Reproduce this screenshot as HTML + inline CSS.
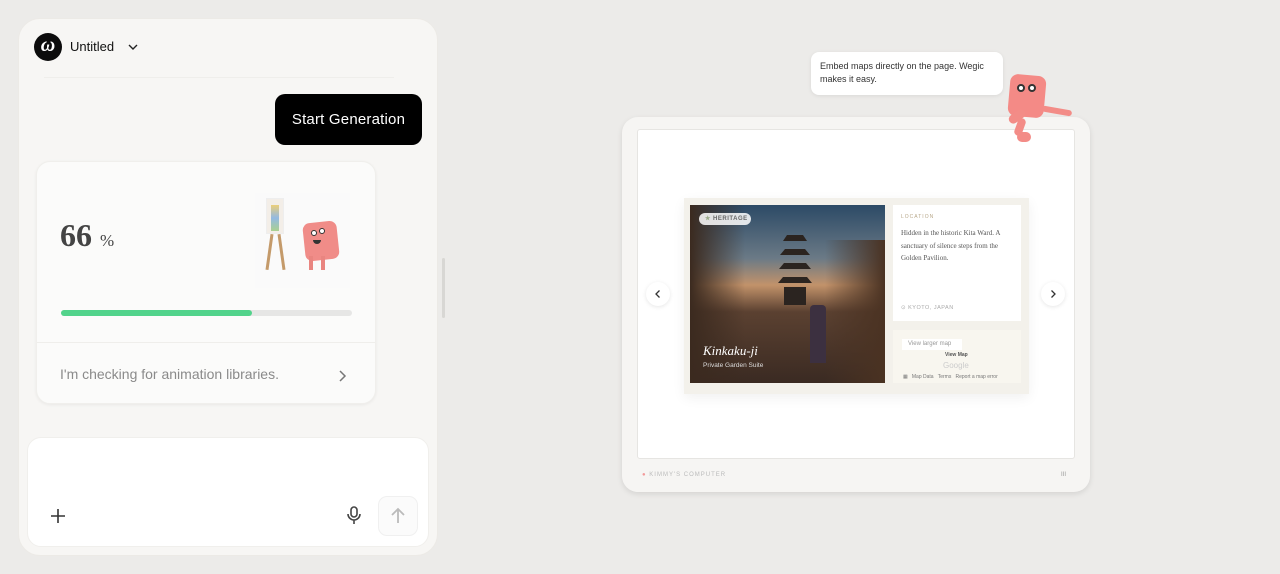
<!DOCTYPE html>
<html><head><meta charset="utf-8"><style>
*{box-sizing:border-box;margin:0;padding:0}
body{width:1280px;height:574px;background:#ecebe9;font-family:"Liberation Sans",sans-serif;position:relative;overflow:hidden}
.a{position:absolute}
</style></head><body>
<!-- left panel -->
<div class="a" style="left:18px;top:18px;width:420px;height:538px;background:#f7f6f4;border-radius:22px;border:1px solid #eceae6"></div>
<div class="a" style="left:34px;top:33px;width:28px;height:28px;border-radius:50%;background:#0c0c0c;color:#fff;font:italic bold 20px 'Liberation Serif',serif;text-align:center;line-height:25px">ω</div>
<div class="a" style="left:70px;top:39px;font-size:13px;color:#111">Untitled</div>
<svg class="a" style="left:127px;top:42px" width="12" height="10"><path d="M2 3l4 4 4-4" stroke="#222" stroke-width="1.4" fill="none"/></svg>
<div class="a" style="left:44px;top:77px;width:350px;height:1px;background:#efeeeb"></div>
<div class="a" style="left:275px;top:94px;width:147px;height:51px;background:#000;border-radius:10px;color:#fff;font-size:15px;line-height:51px;text-align:center;letter-spacing:.2px">Start Generation</div>
<div class="a" style="left:36px;top:161px;width:340px;height:243px;background:#fbfbfa;border-radius:14px;box-shadow:0 1px 3px rgba(0,0,0,.06);border:1px solid #f0efec"></div>
<div class="a" style="left:60px;top:217px;font:bold 32px 'Liberation Serif',serif;color:#444">66 <span style="font-size:17px;font-weight:normal">%</span></div>
<div class="a" style="left:255px;top:193px;width:95px;height:95px;background:#fafafa"></div>
<div class="a" style="left:266px;top:198px;width:18px;height:36px;background:#f3eee8;border:1px solid #eee"></div>
<div class="a" style="left:271px;top:205px;width:8px;height:26px;background:linear-gradient(#e8c14a,#6aa3e0,#8bc46a);opacity:.7"></div>
<div class="a" style="left:268px;top:234px;width:3px;height:36px;background:#c49a6a;transform:rotate(8deg)"></div>
<div class="a" style="left:280px;top:234px;width:3px;height:36px;background:#c49a6a;transform:rotate(-8deg)"></div>
<div class="a" style="left:304px;top:222px;width:34px;height:38px;background:#f08c88;border-radius:7px;transform:rotate(-6deg)"></div>
<div class="a" style="left:311px;top:230px;width:6px;height:6px;border-radius:50%;background:#fff;border:1.5px solid #333"></div>
<div class="a" style="left:319px;top:228px;width:6px;height:6px;border-radius:50%;background:#fff;border:1.5px solid #333"></div>
<div class="a" style="left:313px;top:240px;width:8px;height:4px;border-radius:0 0 4px 4px;background:#333"></div>
<div class="a" style="left:309px;top:256px;width:4px;height:14px;background:#e98580"></div>
<div class="a" style="left:321px;top:256px;width:4px;height:14px;background:#e98580"></div>
<div class="a" style="left:61px;top:310px;width:291px;height:6px;background:#e6e6e5;border-radius:3px"></div>
<div class="a" style="left:61px;top:310px;width:191px;height:6px;background:#52d38b;border-radius:3px"></div>
<div class="a" style="left:37px;top:342px;width:338px;height:1px;background:#efeeeb"></div>
<div class="a" style="left:60px;top:366px;font-size:14px;color:#8a8a8a">I'm checking for animation libraries.</div>
<svg class="a" style="left:336px;top:368px" width="12" height="16"><path d="M4 3l5 5-5 5" stroke="#777" stroke-width="1.5" fill="none"/></svg>
<div class="a" style="left:27px;top:437px;width:402px;height:110px;background:#fff;border-radius:14px;border:1px solid #f0efec"></div>
<svg class="a" style="left:50px;top:508px" width="16" height="16"><path d="M8 1v14M1 8h14" stroke="#333" stroke-width="1.6"/></svg>
<svg class="a" style="left:346px;top:506px" width="16" height="20"><rect x="5" y="1" width="6" height="10" rx="3" stroke="#444" stroke-width="1.6" fill="none"/><path d="M2 8a6 6 0 0 0 12 0M8 14v4" stroke="#444" stroke-width="1.6" fill="none"/></svg>
<div class="a" style="left:378px;top:496px;width:40px;height:40px;border-radius:9px;background:#fbfbfb;border:1px solid #f0f0f0"></div>
<svg class="a" style="left:389px;top:507px" width="18" height="18"><path d="M9 16V2M3 8l6-6 6 6" stroke="#bbb" stroke-width="1.8" fill="none"/></svg>
<div class="a" style="left:442px;top:258px;width:3px;height:60px;background:#d8d7d4;border-radius:2px"></div>
<!-- device -->
<div class="a" style="left:622px;top:117px;width:468px;height:375px;background:#f6f5f3;border-radius:16px;box-shadow:0 2px 6px rgba(0,0,0,.1)"></div>
<div class="a" style="left:637px;top:129px;width:438px;height:330px;background:#fff;border:1.5px solid #e6e5e2;border-radius:3px"></div>
<div class="a" style="left:642px;top:472px;font-size:6px;letter-spacing:1px;color:#bbb"><span style="color:#f29a9a">●</span> KIMMY'S COMPUTER</div>
<div class="a" style="left:1061px;top:472px;font-size:6px;color:#999">III</div>
<div class="a" style="left:684px;top:198px;width:345px;height:196px;background:#f3f1eb;box-shadow:0 4px 12px rgba(0,0,0,.06)"></div>
<div class="a" style="left:690px;top:205px;width:195px;height:178px;background:linear-gradient(180deg,#2c4a66 0%,#6b7a86 30%,#c2926a 45%,#5b4131 60%,#3a2a22 100%)"></div>
<div class="a" style="left:690px;top:205px;width:55px;height:178px;background:linear-gradient(90deg,#3b2a1f,rgba(60,40,30,0))"></div>
<div class="a" style="left:825px;top:240px;width:60px;height:143px;background:linear-gradient(90deg,rgba(60,40,30,0),#4a3222)"></div>
<svg class="a" style="left:770px;top:215px" width="50" height="90"><path d="M25 0v12M17 20h16l4 6H13zM15 34h20l5 6H10zM14 48h22l5 6H9zM13 62h24l5 6H8zM14 72h22v18H14z" fill="#2b2420"/></svg>
<div class="a" style="left:810px;top:305px;width:16px;height:58px;background:#3c3040;border-radius:4px 4px 0 0"></div>
<div class="a" style="left:699px;top:213px;width:52px;height:12px;background:rgba(255,255,255,.85);border-radius:6px;font-size:6px;font-weight:bold;color:#666;line-height:12px;padding-left:6px;letter-spacing:.5px"><span style="color:#9a8">★</span> HERITAGE</div>
<div class="a" style="left:703px;top:343px;font:italic 13px 'Liberation Serif',serif;color:#fff">Kinkaku-ji</div>
<div class="a" style="left:703px;top:362px;font-size:6.5px;color:#ddd">Private Garden Suite</div>
<div class="a" style="left:893px;top:205px;width:128px;height:116px;background:#fff"></div>
<div class="a" style="left:901px;top:214px;font-size:5px;letter-spacing:1px;color:#b8a88a">LOCATION</div>
<div class="a" style="left:901px;top:227px;width:116px;font:7px/12.5px 'Liberation Serif',serif;color:#555">Hidden in the historic Kita Ward. A sanctuary of silence steps from the Golden Pavilion.</div>
<div class="a" style="left:901px;top:305px;font-size:5.5px;letter-spacing:.5px;color:#aaa">⊙ KYOTO, JAPAN</div>
<div class="a" style="left:893px;top:330px;width:128px;height:53px;background:#f8f6ef"></div>
<div class="a" style="left:902px;top:339px;width:60px;height:11px;background:#fff;font-size:6px;color:#999;line-height:11px;padding-left:6px">View larger map</div>
<div class="a" style="left:945px;top:352px;font-size:5px;color:#555;font-weight:bold">View Map</div>
<div class="a" style="left:943px;top:361px;font-size:8px;color:#ccc">Google</div>
<div class="a" style="left:903px;top:374px;font-size:5px;color:#777;white-space:nowrap">▦ &nbsp;&nbsp;Map Data &nbsp;&nbsp;Terms &nbsp;&nbsp;Report a map error</div>
<div class="a" style="left:646px;top:282px;width:24px;height:24px;border-radius:50%;background:#fff;box-shadow:0 1px 4px rgba(0,0,0,.1)"></div>
<svg class="a" style="left:652px;top:288px" width="12" height="12"><path d="M7.5 2.5L4 6l3.5 3.5" stroke="#333" stroke-width="1.3" fill="none"/></svg>
<div class="a" style="left:1041px;top:282px;width:24px;height:24px;border-radius:50%;background:#fff;box-shadow:0 1px 4px rgba(0,0,0,.1)"></div>
<svg class="a" style="left:1047px;top:288px" width="12" height="12"><path d="M4.5 2.5L8 6l-3.5 3.5" stroke="#333" stroke-width="1.3" fill="none"/></svg>
<!-- tooltip -->
<div class="a" style="left:811px;top:52px;width:192px;height:43px;background:#fff;border-radius:8px;box-shadow:0 1px 4px rgba(0,0,0,.08);font-size:9px;line-height:13px;color:#333;padding:8px 9px">Embed maps directly on the page. Wegic makes it easy.</div>
<!-- mascot -->
<div class="a" style="left:1009px;top:75px;width:36px;height:42px;background:#f48a86;border-radius:8px;transform:rotate(5deg)"></div>
<div class="a" style="left:1017px;top:84px;width:8px;height:8px;border-radius:50%;background:#fff;border:2px solid #333"></div>
<div class="a" style="left:1028px;top:84px;width:8px;height:8px;border-radius:50%;background:#fff;border:2px solid #333"></div>
<div class="a" style="left:1008px;top:112px;width:18px;height:9px;background:#f38c87;border-radius:5px;transform:rotate(-35deg)"></div>
<div class="a" style="left:1016px;top:118px;width:8px;height:18px;background:#f38c87;border-radius:4px;transform:rotate(20deg)"></div>
<div class="a" style="left:1017px;top:132px;width:14px;height:10px;background:#f38c87;border-radius:6px"></div>
<div class="a" style="left:1042px;top:108px;width:30px;height:6px;background:#f38c87;border-radius:3px;transform:rotate(10deg)"></div>
</body></html>
